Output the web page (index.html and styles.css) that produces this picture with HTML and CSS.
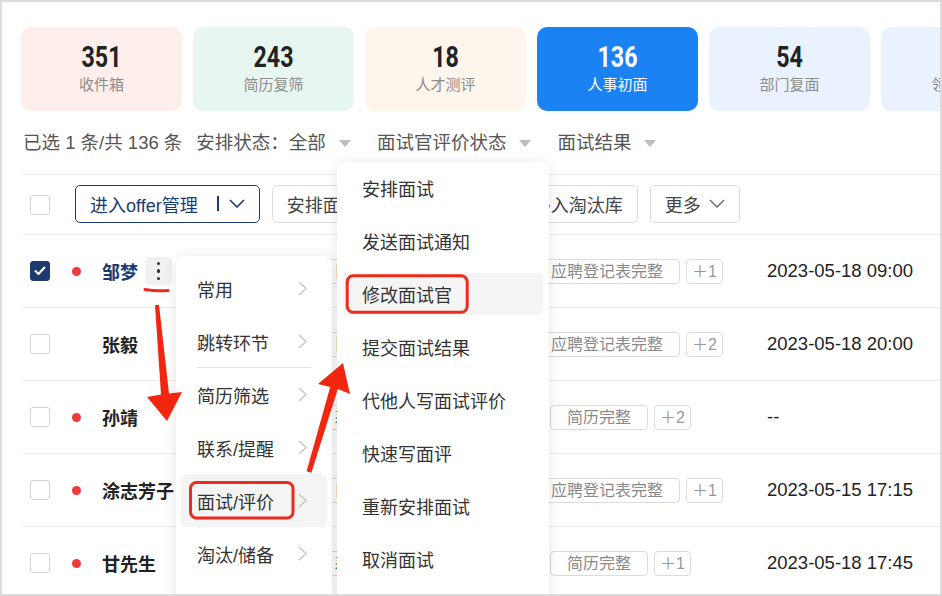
FILE: index.html
```html
<!DOCTYPE html>
<html lang="zh-CN">

<head>
    <meta charset="UTF-8">
    <meta name="viewport" content="width=device-width, initial-scale=1.0">
    <title>人事初面</title>
    <link rel="stylesheet" href="styles.css">
</head>

<body>
    <div class="page">
        <div class="stages">
            <div class="stage stage-red"><div class="num">351</div><div class="label">收件箱</div></div>
            <div class="stage stage-green"><div class="num">243</div><div class="label">简历复筛</div></div>
            <div class="stage stage-orange"><div class="num">18</div><div class="label">人才测评</div></div>
            <div class="stage stage-active"><div class="num">136</div><div class="label">人事初面</div></div>
            <div class="stage stage-blue"><div class="num">54</div><div class="label">部门复面</div></div>
            <div class="stage stage-blue"><div class="num">12</div><div class="label">领导终面</div></div>
        </div>

        <div class="filters">
            <span class="count">已选 1 条/共 136 条</span>
            <span class="filter first">安排状态：全部<i class="caret"></i></span>
            <span class="filter">面试官评价状态<i class="caret"></i></span>
            <span class="filter">面试结果<i class="caret"></i></span>
        </div>

        <div class="table">
            <div class="toolbar">
                <span class="check"></span>
                <button class="btn btn-primary">进入offer管理<span class="bar"></span>
                    <svg class="down" width="16" height="9" viewBox="0 0 16 9"><polyline points="1,1 8,8 15,1" /></svg>
                </button>
                <button class="btn">安排面试</button>
                <button class="btn">修改面试官</button>
                <button class="btn">移入淘汰库</button>
                <button class="btn">更多
                    <svg class="down" width="16" height="9" viewBox="0 0 16 9"><polyline points="1,1 8,8 15,1" /></svg>
                </button>
            </div>

            <div class="row">
                <span class="check checked">
                    <svg width="12" height="10" viewBox="0 0 12 10"><polyline points="1.5,5 4.5,8 10.5,1.5" /></svg>
                </span>
                <span class="dot"></span>
                <div class="name-cell"><span class="name selected">邹梦</span><span class="more"><i></i><i></i><i></i></span></div>
                <div class="tags">
                    <span class="tag tag-src">日常招聘｜官网投递简历</span>
                    <span class="tag">应聘登记表完整</span>
                    <span class="tag tag-more">＋1</span>
                </div>
                <span class="date">2023-05-18 09:00</span>
            </div>

            <div class="row">
                <span class="check"></span>
                <span class="dot none"></span>
                <div class="name-cell"><span class="name">张毅</span></div>
                <div class="tags">
                    <span class="tag tag-src">日常招聘｜官网投递简历</span>
                    <span class="tag">应聘登记表完整</span>
                    <span class="tag tag-more">＋2</span>
                </div>
                <span class="date">2023-05-18 20:00</span>
            </div>

            <div class="row">
                <span class="check"></span>
                <span class="dot"></span>
                <div class="name-cell"><span class="name">孙靖</span></div>
                <div class="tags">
                    <span class="tag tag-src tag-green">系统推荐｜人才库智能匹配</span>
                    <span class="tag">简历完整</span>
                    <span class="tag tag-more">＋2</span>
                </div>
                <span class="date">--</span>
            </div>

            <div class="row">
                <span class="check"></span>
                <span class="dot"></span>
                <div class="name-cell"><span class="name">涂志芳子</span></div>
                <div class="tags">
                    <span class="tag tag-src">日常招聘｜官网投递简历</span>
                    <span class="tag">应聘登记表完整</span>
                    <span class="tag tag-more">＋1</span>
                </div>
                <span class="date">2023-05-15 17:15</span>
            </div>

            <div class="row">
                <span class="check"></span>
                <span class="dot"></span>
                <div class="name-cell"><span class="name">甘先生</span></div>
                <div class="tags">
                    <span class="tag tag-src tag-green">系统推荐｜人才库智能匹配</span>
                    <span class="tag">简历完整</span>
                    <span class="tag tag-more">＋1</span>
                </div>
                <span class="date">2023-05-18 17:45</span>
            </div>
        </div>

        <!-- row action menu -->
        <div class="menu menu-main">
            <div class="item">常用<svg class="arrow" width="9" height="15" viewBox="0 0 9 15"><polyline points="1,1 8,7.5 1,14" /></svg></div>
            <div class="item sep">跳转环节<svg class="arrow" width="9" height="15" viewBox="0 0 9 15"><polyline points="1,1 8,7.5 1,14" /></svg></div>
            <div class="item">简历筛选<svg class="arrow" width="9" height="15" viewBox="0 0 9 15"><polyline points="1,1 8,7.5 1,14" /></svg></div>
            <div class="item">联系/提醒<svg class="arrow" width="9" height="15" viewBox="0 0 9 15"><polyline points="1,1 8,7.5 1,14" /></svg></div>
            <div class="item on">面试/评价<svg class="arrow" width="9" height="15" viewBox="0 0 9 15"><polyline points="1,1 8,7.5 1,14" /></svg></div>
            <div class="item">淘汰/储备<svg class="arrow" width="9" height="15" viewBox="0 0 9 15"><polyline points="1,1 8,7.5 1,14" /></svg></div>
        </div>

        <div class="menu menu-sub">
            <div class="item">安排面试</div>
            <div class="item">发送面试通知</div>
            <div class="item on">修改面试官</div>
            <div class="item">提交面试结果</div>
            <div class="item">代他人写面试评价</div>
            <div class="item">快速写面评</div>
            <div class="item">重新安排面试</div>
            <div class="item">取消面试</div>
        </div>

        <!-- red annotation marks drawn over the screenshot -->
        <svg class="marks" width="942" height="596" viewBox="0 0 942 596">
            <path class="stroke" d="M145 289.5 Q156 291.5 168 290.5" />
            <polygon points="155,305.2 161,394.4 147,397 167,421 182,392 169,393.6 159,304.8" />
            <polygon points="306.6,471.3 330.2,386.9 318,384 343,363 350,394 337.8,389.1 311.4,472.7" />
            <rect class="stroke" x="190.5" y="482.5" width="102.5" height="35.5" rx="6" />
            <rect class="stroke" x="347.2" y="275.7" width="120" height="36.6" rx="6" />
        </svg>
    </div>
</body>

</html>
```

FILE: styles.css
```css
body {
    margin: 0;
    font-family: "Liberation Sans", "Noto Sans CJK SC", sans-serif;
    color: #333;
    background: #ffffff;
}

.page {
    position: relative;
    width: 942px;
    height: 596px;
    box-sizing: border-box;
    border: 2px solid #dcdcdc;
    overflow: hidden;
    background: #ffffff;
}

/* stage cards */
.stages {
    display: flex;
    gap: 11px;
    padding: 25px 0 0 19px;
}

.stage {
    flex: 0 0 161px;
    height: 84px;
    box-sizing: border-box;
    padding-top: 14px;
    border-radius: 10px;
    text-align: center;
}

.stage .num {
    font-family: Roboto, "Liberation Sans", sans-serif;
    font-weight: bold;
    font-size: 29px;
    line-height: 32px;
    color: #222;
    transform: scaleX(0.8);
}

.stage .label {
    margin-top: 2px;
    font-size: 15px;
    line-height: 20px;
    color: #8c8c8c;
}

.stage-red { background: #feeeeb; }
.stage-green { background: #e8f6f1; }
.stage-orange { background: #fef6ec; }
.stage-blue { background: #e9f2fe; }

.stage-active {
    background: #1a82f3;
}

.stage-active .num,
.stage-active .label {
    color: #ffffff;
}

/* filter bar */
.filters {
    display: flex;
    align-items: center;
    margin-top: 19px;
    padding-left: 21px;
    font-size: 18.5px;
    line-height: 26px;
    color: #555;
}

.filter {
    display: inline-flex;
    align-items: center;
    margin-left: 26px;
}

.filter.first {
    margin-left: 14px;
}

.caret {
    display: inline-block;
    margin-left: 13px;
    width: 0;
    height: 0;
    border-left: 6px solid transparent;
    border-right: 6px solid transparent;
    border-top: 7px solid #bdbdbd;
}

/* table */
.table {
    margin-top: 18px;
    margin-left: 20px;
}

.toolbar {
    display: flex;
    align-items: center;
    gap: 12px;
    height: 59px;
    padding-left: 8px;
    border-top: 1px solid #ebebeb;
    border-bottom: 1px solid #ebebeb;
}

.toolbar .check {
    margin-right: 13px;
}

.check {
    display: inline-flex;
    align-items: center;
    justify-content: center;
    flex: 0 0 auto;
    width: 20px;
    height: 20px;
    box-sizing: border-box;
    border: 1px solid #d2d2d2;
    border-radius: 3px;
    background: #ffffff;
}

.check.checked {
    background: #1d3a70;
    border-color: #1d3a70;
}

.check svg polyline {
    fill: none;
    stroke: #ffffff;
    stroke-width: 2;
    stroke-linecap: round;
    stroke-linejoin: round;
}

.btn {
    display: inline-flex;
    align-items: center;
    height: 38px;
    margin-top: -2px;
    padding: 0 14px;
    border: 1px solid #dcdcdc;
    border-radius: 5px;
    background: #ffffff;
    font-family: inherit;
    font-size: 18px;
    color: #444;
    white-space: nowrap;
}

.btn .down {
    margin-left: 8px;
}

.btn .down polyline {
    fill: none;
    stroke: #666;
    stroke-width: 1.4;
}

.btn-primary {
    border-color: #1d3a70;
    color: #1d3a70;
}

.btn-primary .bar {
    width: 2px;
    height: 15px;
    margin-left: 19px;
    background: #1d3a70;
}

.btn-primary .down {
    margin-left: 10px;
}

.btn-primary .down polyline {
    stroke: #1d3a70;
    stroke-width: 1.6;
}

.row {
    display: flex;
    align-items: center;
    height: 72px;
    padding-left: 8px;
    border-bottom: 1px solid #ebebeb;
}

.dot {
    flex: 0 0 9px;
    height: 9px;
    margin-left: 22px;
    margin-right: 21px;
    border-radius: 50%;
    background: #f0393a;
}

.dot.none {
    visibility: hidden;
}

.name-cell {
    display: flex;
    align-items: center;
    flex: 0 0 214px;
}

.name {
    font-size: 18px;
    font-weight: bold;
    color: #222;
}

.name.selected {
    color: #1d3a70;
}

.more {
    display: flex;
    flex-direction: column;
    align-items: center;
    justify-content: center;
    gap: 4px;
    width: 27px;
    height: 28px;
    margin-left: 7px;
    border-radius: 4px;
    background: #f1f1f1;
}

.more i {
    width: 3.5px;
    height: 3.5px;
    border-radius: 50%;
    background: #333;
}

.tags {
    display: flex;
    gap: 6px;
    flex: 0 0 451px;
    overflow: hidden;
}

.tag {
    flex: 0 0 auto;
    height: 25px;
    box-sizing: border-box;
    padding: 0 16px;
    border: 1px solid #dcdcdc;
    border-radius: 4px;
    font-size: 16px;
    line-height: 23px;
    color: #8a8a8a;
    white-space: nowrap;
}

.tag-src {
    padding: 0 17px;
}

.tag-green {
    color: #3a9c6e;
    border-color: #c4e6d3;
}

.tag-more {
    padding: 0 5px;
    color: #999;
}

.date {
    font-size: 18.5px;
    color: #222;
}

/* dropdown menus */
.menu {
    position: absolute;
    box-sizing: border-box;
    height: 440px;
    border-radius: 8px;
    background: #ffffff;
    box-shadow: 0 2px 14px rgba(0, 0, 0, 0.11);
}

.menu .item {
    display: flex;
    align-items: center;
    justify-content: space-between;
    font-size: 18px;
    color: #333;
    border-radius: 6px;
}

.menu .item.on {
    background: #f4f4f4;
}

.menu-main {
    top: 254px;
    left: 174px;
    width: 156px;
    padding: 6px 5px;
}

.menu-main .item {
    position: relative;
    height: 53px;
    padding: 0 20px 0 16px;
}

.menu-main .item.sep::after {
    content: "";
    position: absolute;
    left: 16px;
    right: 16px;
    bottom: 0;
    height: 1px;
    background: #e2e2e2;
}

.arrow polyline {
    fill: none;
    stroke: #c6c6c6;
    stroke-width: 1.4;
}

.menu-sub {
    top: 160px;
    left: 335px;
    width: 212px;
    padding: 5px 6px;
}

.menu-sub .item {
    height: 42px;
    margin-bottom: 11px;
    padding-left: 19px;
}

.marks {
    position: absolute;
    top: -2px;
    left: -2px;
    pointer-events: none;
}

.marks polygon {
    fill: #f2260f;
}

.marks .stroke {
    fill: none;
    stroke: #ee2a1a;
    stroke-width: 3;
    stroke-linecap: round;
}
```
